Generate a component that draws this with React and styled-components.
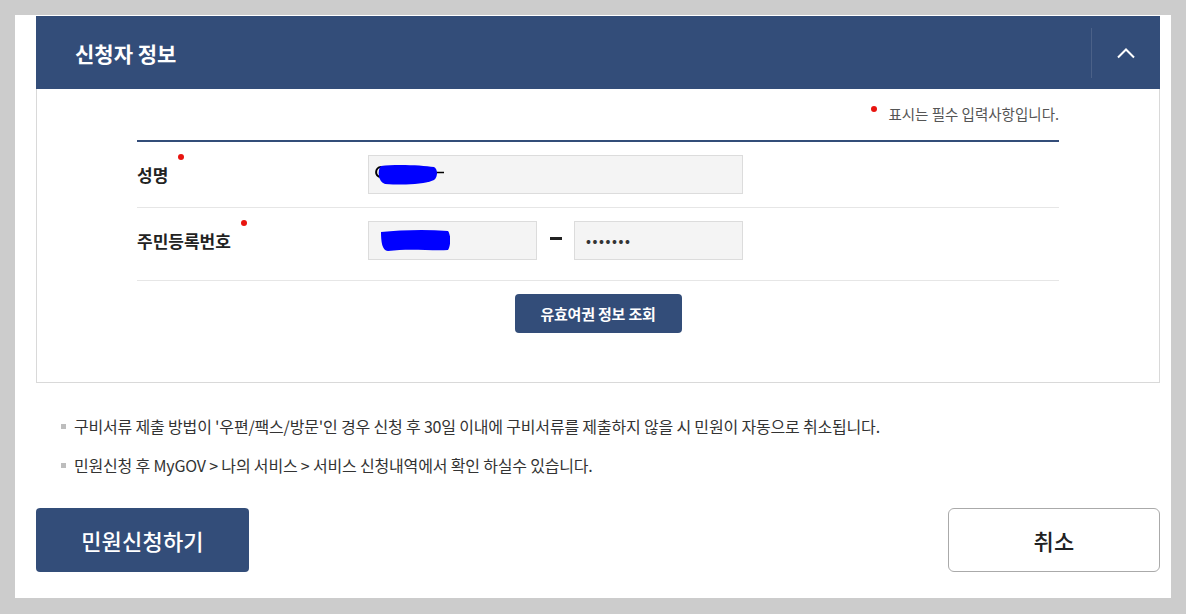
import styled, { createGlobalStyle } from "styled-components";

const GlobalStyle = createGlobalStyle`
  html, body {
    margin: 0;
    padding: 0;
    background: #cccccc;
  }
  body {
    font-family: "Noto Sans CJK KR", "Noto Sans", sans-serif;
    color: #222;
  }
`;

const Frame = styled.div`
  padding: 15px 15px 16px 15px;
`;

const Page = styled.div`
  background: #fff;
  padding: 1px 11px 26px 21px;
`;

const Header = styled.div`
  height: 73px;
  background: #334d79;
  display: flex;
  align-items: center;
  justify-content: space-between;
  padding-left: 39px;
`;

const Title = styled.h2`
  margin: 0;
  color: #fff;
  font-size: 21px;
  font-weight: 700;
  letter-spacing: 0;
`;

const ToggleButton = styled.button`
  width: 69px;
  height: 50px;
  border: 0;
  border-left: 1px solid #4b6188;
  background: transparent;
  display: flex;
  align-items: center;
  justify-content: center;
  padding: 0;
  cursor: pointer;
`;

const Body = styled.div`
  border: 1px solid #d9d9d9;
  border-top: 0;
  padding: 15px 100px 49px 100px;
`;

const RequiredNote = styled.p`
  margin: 0 0 16px;
  display: flex;
  justify-content: flex-end;
  align-items: center;
  font-size: 14.5px;
  line-height: 20px;
  color: #555;
  letter-spacing: 0;
`;

const Dot = styled.span`
  display: inline-block;
  width: 6px;
  height: 6px;
  border-radius: 50%;
  background: #e8140f;
  flex: none;
  margin: ${(p) => p.$margin};
`;

const Table = styled.div`
  border-top: 2px solid #334d79;
`;

const Row = styled.div`
  display: flex;
  align-items: center;
  border-bottom: 1px solid #e6e6e6;
  padding: ${(p) => p.$pad};
`;

const Label = styled.div`
  width: 231px;
  height: 39px;
  display: flex;
  align-items: center;
  font-size: 17px;
  line-height: 24px;
  font-weight: 700;
  color: #222;
`;

const Field = styled.div`
  width: ${(p) => p.$w}px;
  height: 39px;
  box-sizing: border-box;
  background: #f4f4f4;
  border: 1px solid #dcdcdc;
  display: flex;
  align-items: center;
  padding-left: ${(p) => p.$pl || 11}px;
  font-size: 14px;
  color: #333;
`;

const Masked = styled.span`
  font-size: 13px;
  font-weight: 700;
  letter-spacing: 1.6px;
  color: #333;
`;

const Dash = styled.div`
  width: 37px;
  display: flex;
  justify-content: center;
  padding-bottom: 4px;
  &::before {
    content: "";
    width: 12px;
    height: 3px;
    background: #222;
  }
`;

const Redact = styled.svg`
  display: block;
`;

const Center = styled.div`
  display: flex;
  justify-content: center;
  padding-top: 13px;
`;

const SmallButton = styled.button`
  width: 167px;
  height: 39px;
  border: 0;
  border-radius: 4px;
  background: #334d79;
  color: #fff;
  font-family: inherit;
  font-size: 15px;
  font-weight: 700;
  letter-spacing: -0.2px;
  cursor: pointer;
`;

const Notes = styled.ul`
  list-style: none;
  margin: 31px 0 0;
  padding: 0 0 0 25px;
  display: flex;
  flex-direction: column;
  gap: 15px;
`;

const Note = styled.li`
  display: flex;
  align-items: center;
  font-size: 16px;
  line-height: 24px;
  color: #333;
  letter-spacing: -0.18px;
  &::before {
    content: "";
    width: 5px;
    height: 5px;
    background: #bdbdbd;
    margin-right: 8px;
    flex: none;
  }
`;

const Actions = styled.div`
  margin-top: 31px;
  display: flex;
  justify-content: space-between;
`;

const BigButton = styled.button`
  width: ${(p) => p.$w}px;
  height: 64px;
  box-sizing: border-box;
  border-radius: ${(p) => (p.$primary ? "4px" : "6px")};
  border: ${(p) => (p.$primary ? "0" : "1px solid #aaa")};
  background: ${(p) => (p.$primary ? "#334d79" : "#fff")};
  color: ${(p) => (p.$primary ? "#fff" : "#222")};
  font-family: inherit;
  font-size: 22px;
  font-weight: 500;
  letter-spacing: 0.2px;
  cursor: pointer;
`;

const Blob = ({ w, h, d }) => (
  <Redact width={w} height={h} viewBox={`0 0 ${w} ${h}`}>
    <path d={d} fill="#0000ff" />
  </Redact>
);

export default function App() {
  return (
    <Frame>
      <GlobalStyle />
      <Page>
        <Header>
          <Title>신청자 정보</Title>
          <ToggleButton aria-label="접기">
            <svg width="20" height="12" viewBox="0 0 20 12">
              <path d="M2 10.5 L10 2.5 L18 10.5" fill="none" stroke="#fff" strokeWidth="2" />
            </svg>
          </ToggleButton>
        </Header>
        <Body>
          <RequiredNote>
            <Dot $margin="0 11px 10px 0" />
            표시는 필수 입력사항입니다.
          </RequiredNote>
          <Table>
            <Row $pad="13px 0">
              <Label>
                성명
                <Dot $margin="0 0 36px 10px" />
              </Label>
              <Field $w={375} $pl={5}>
                <svg width="72" height="22" viewBox="0 0 72 22">
                  <path d="M7 3 C1 3 0 13 7 13" fill="none" stroke="#000" strokeWidth="2" />
                  <path d="M62 8.5 L70 8.5" stroke="#000" strokeWidth="1.5" />
                  <path d="M7 2 C20 0 48 1 60 3 C64 5 64 13 60 16 C48 21 28 21 11 20 C4 18 3 6 7 2 Z" fill="#0000ff" />
                </svg>
              </Field>
            </Row>
            <Row $pad="13px 0 20px">
              <Label>
                주민등록번호
                <Dot $margin="0 0 36px 10px" />
              </Label>
              <Field $w={169}>
                <Blob
                  w={70}
                  h={23}
                  d="M1 3 C20 1 45 0 68 2 C71 6 71 16 68 21 C50 22 30 19 8 22 C2 22 1 12 1 3 Z"
                />
              </Field>
              <Dash />
              <Field $w={169}>
                <Masked>•••••••</Masked>
              </Field>
            </Row>
          </Table>
          <Center>
            <SmallButton>유효여권 정보 조회</SmallButton>
          </Center>
        </Body>
        <Notes>
          <Note>
            구비서류 제출 방법이 '우편/팩스/방문'인 경우 신청 후 30일 이내에 구비서류를 제출하지 않을 시 민원이 자동으로 취소됩니다.
          </Note>
          <Note>민원신청 후 MyGOV &gt; 나의 서비스 &gt; 서비스 신청내역에서 확인 하실수 있습니다.</Note>
        </Notes>
        <Actions>
          <BigButton $primary $w={213}>민원신청하기</BigButton>
          <BigButton $w={212}>취소</BigButton>
        </Actions>
      </Page>
    </Frame>
  );
}
